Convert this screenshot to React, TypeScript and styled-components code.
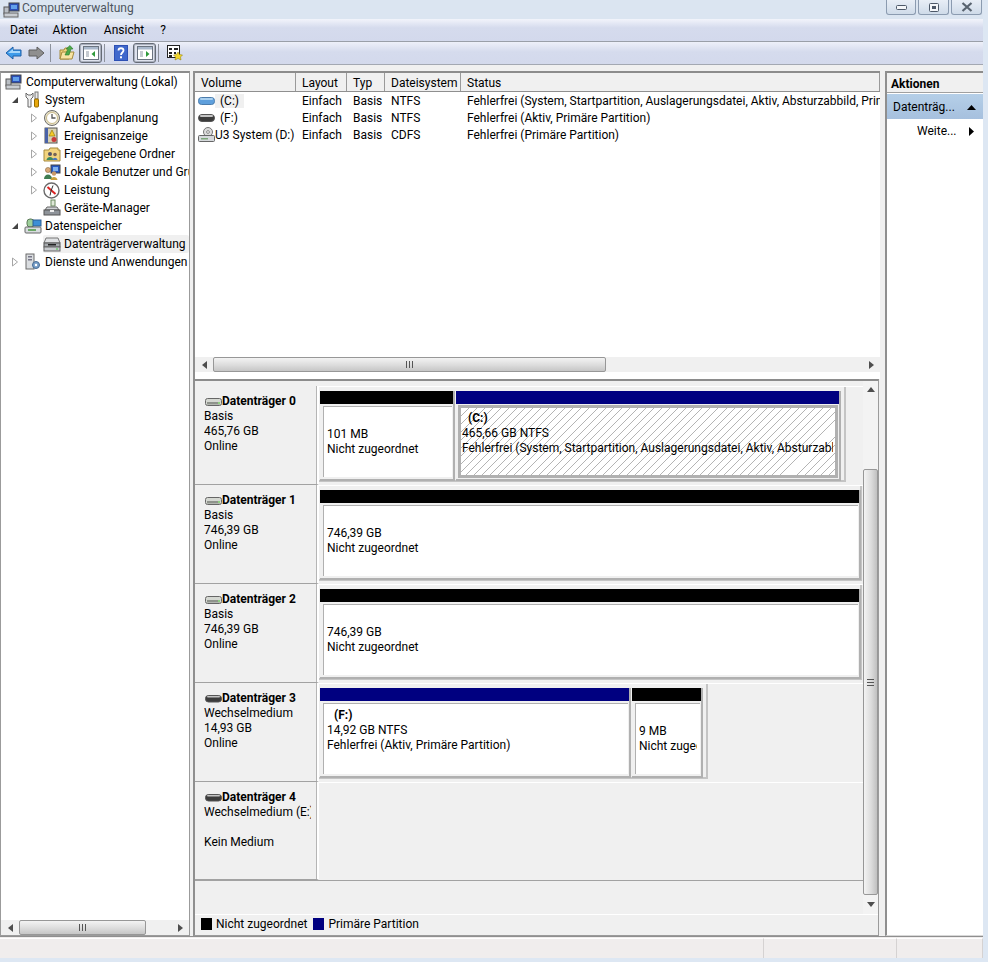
import React from 'react';
import styled, { createGlobalStyle } from 'styled-components';

const GlobalStyle = createGlobalStyle`
  html, body {
    margin: 0;
    padding: 0;
    background: #dde7f3;
  }
  body {
    font-family: Roboto, 'Noto Sans', sans-serif;
    font-size: 12px;
    color: #000;
    overflow: hidden;
  }
`;

/* ---------- icons ---------- */

const ComputerIcon = () => (
  <svg width="17" height="16" viewBox="0 0 17 16">
    <rect x="6" y="1" width="10" height="8" fill="#2b4fb8" stroke="#444" />
    <rect x="8" y="3" width="6" height="4" fill="#62a0ea" />
    <rect x="1" y="5" width="5" height="7" fill="#b9bec4" stroke="#555" />
    <rect x="1" y="11" width="14" height="4" fill="#c9cdd2" stroke="#666" />
  </svg>
);
const ToolsIcon = () => (
  <svg width="17" height="18" viewBox="0 0 17 18">
    <path d="M2 2 L2 6 L4 8 L4 16 L7 16 L7 8 L9 6 L9 2 L7 4 L4 4 Z" fill="#f2f2f2" stroke="#666" />
    <rect x="11" y="1" width="3" height="7" fill="#e8e8e8" stroke="#777" />
    <rect x="10.5" y="8" width="4" height="8" rx="1" fill="#e8a80c" stroke="#946b00" />
  </svg>
);
const ClockIcon = () => (
  <svg width="18" height="18" viewBox="0 0 18 18">
    <circle cx="9" cy="9" r="7.5" fill="#e8e2c8" stroke="#6d6d6d" />
    <circle cx="9" cy="9" r="5.5" fill="#fff" stroke="#c8b98a" />
    <path d="M9 5 V9 H12.5" fill="none" stroke="#555" strokeWidth="1.3" />
  </svg>
);
const EventIcon = () => (
  <svg width="17" height="18" viewBox="0 0 17 18">
    <rect x="2" y="1" width="12" height="15" fill="#d8d2b4" stroke="#555" />
    <rect x="2" y="1" width="3" height="15" fill="#4a63a8" />
    <path d="M9 3 L12 9 H6 Z" fill="#f5cc2a" stroke="#8a6c00" strokeWidth=".6" />
    <circle cx="11" cy="12.5" r="2.5" fill="#c83a3a" />
  </svg>
);
const SharedFolderIcon = () => (
  <svg width="18" height="17" viewBox="0 0 18 17">
    <path d="M1 4 H6 L7 2 H15 V4 H17 V15 H1 Z" fill="#f2d47e" stroke="#a58a3c" />
    <circle cx="7" cy="8" r="2" fill="#556" />
    <path d="M3.5 14 C4 10 10 10 10.5 14 Z" fill="#3c8a5e" />
    <circle cx="12" cy="8.5" r="1.8" fill="#765" />
    <path d="M9.5 14 C10 11 14 11 14.5 14 Z" fill="#4a76b8" />
  </svg>
);
const UsersIcon = () => (
  <svg width="18" height="17" viewBox="0 0 18 17">
    <rect x="8" y="1" width="9" height="8" fill="#2458c4" stroke="#444" />
    <rect x="10" y="3" width="5" height="4" fill="#7fb2ef" />
    <circle cx="5" cy="6" r="2.6" fill="#d8a878" stroke="#7a5a30" strokeWidth=".5" />
    <path d="M1 15 C1 9 9 9 9 15 Z" fill="#3f7d52" />
    <circle cx="11" cy="9.5" r="2.2" fill="#c89868" />
    <path d="M7.5 16 C8 12 14 12 14.5 16 Z" fill="#c8a03c" />
  </svg>
);
const PerformanceIcon = () => (
  <svg width="17" height="17" viewBox="0 0 17 17">
    <circle cx="8.5" cy="8.5" r="7.5" fill="#fff" stroke="#6a6a6a" strokeWidth="1.4" />
    <path d="M4.5 5 L12.5 12" stroke="#d22" strokeWidth="2" />
    <path d="M10 3.5 L8 9 L7 13.5" fill="none" stroke="#333" />
  </svg>
);
const DeviceIcon = () => (
  <svg width="18" height="18" viewBox="0 0 18 18">
    <rect x="8" y="1" width="4" height="6" fill="#dfe8d8" stroke="#6b8a5f" />
    <path d="M4 8 H14 L16 11 H2 Z" fill="#cfd2d5" stroke="#666" />
    <rect x="1" y="11" width="16" height="5" fill="#8f949a" stroke="#555" />
    <rect x="7" y="11" width="4" height="2" fill="#eee" />
  </svg>
);
const StorageIcon = () => (
  <svg width="18" height="18" viewBox="0 0 18 18">
    <rect x="3" y="2" width="7" height="8" rx="3" fill="#9dcf9a" stroke="#5c7a58" />
    <rect x="9" y="3" width="8" height="6" fill="#3d8fd6" stroke="#2c5f94" />
    <rect x="1" y="10" width="16" height="6" rx="1" fill="#d8dcdf" stroke="#666" />
    <rect x="4" y="12" width="8" height="2" fill="#6ca868" />
  </svg>
);
const DiskMgmtIcon = () => (
  <svg width="18" height="17" viewBox="0 0 18 17">
    <path d="M3 2 H15 L17 7 H1 Z" fill="#dfe1e3" stroke="#777" />
    <rect x="1" y="7" width="16" height="4" fill="#a6aaae" stroke="#555" />
    <rect x="1" y="11" width="16" height="4" fill="#c9ccd0" stroke="#666" />
    <rect x="5" y="8" width="8" height="1.5" fill="#222" />
    <rect x="13" y="12.5" width="2" height="1" fill="#4c4" />
  </svg>
);
const ServicesIcon = () => (
  <svg width="17" height="18" viewBox="0 0 17 18">
    <rect x="2" y="1" width="8" height="15" fill="#dadde0" stroke="#6a6a6a" />
    <rect x="4" y="3" width="4" height="1.5" fill="#778" />
    <rect x="4" y="6" width="4" height="1.5" fill="#778" />
    <circle cx="12" cy="12" r="3.5" fill="#7aa0c8" stroke="#456a94" />
    <circle cx="12" cy="12" r="1.2" fill="#fff" />
  </svg>
);

const BackIcon = () => (
  <svg width="17" height="14" viewBox="0 0 17 14">
    <path d="M1 7 L8 1 V4 H16 V10 H8 V13 Z" fill="#3d9bea" stroke="#1d5fa8" />
    <path d="M3 7 L8 3 V5 H15 V7 Z" fill="#a7d7fa" />
  </svg>
);
const ForwardIcon = () => (
  <svg width="17" height="14" viewBox="0 0 17 14">
    <path d="M16 7 L9 1 V4 H1 V10 H9 V13 Z" fill="#8f8f8f" stroke="#5f5f5f" />
  </svg>
);
const FolderUpIcon = () => (
  <svg width="16" height="16" viewBox="0 0 16 16">
    <path d="M1 5 H5 L6 3 H10 V14 H1 Z" fill="#f2d47e" stroke="#a58a3c" />
    <path d="M1 14 L3 7 H15 L13 14 Z" fill="#f8e4a4" stroke="#a58a3c" />
    <path d="M6 10 L9 4 L7 4 L11 0.5 L14 4 L12 4 L10 10 Z" fill="#4da94a" stroke="#2a7a2a" strokeWidth=".6" />
  </svg>
);
const PaneIcon = ({ arrow }: { arrow: 'left' | 'right' }) => (
  <svg width="16" height="14" viewBox="0 0 16 14">
    <rect x=".5" y=".5" width="15" height="13" fill="#fff" stroke="#6b7480" />
    <rect x="1" y="1" width="14" height="2.5" fill="#a9b8cc" />
    <path d="M3 6 H6 M3 8 H6 M3 10 H6" stroke="#8a94a0" />
    {arrow === 'left' ? (
      <path d="M12 5 L8.5 8 L12 11 Z" fill="#2f9a3a" />
    ) : (
      <path d="M9 5 L12.5 8 L9 11 Z" fill="#2f9a3a" />
    )}
  </svg>
);
const HelpIcon = () => (
  <svg width="14" height="16" viewBox="0 0 14 16">
    <rect width="14" height="16" fill="#2d50b4" />
    <rect x="1" y="1" width="12" height="14" fill="#3f68cc" />
    <path d="M4.5 5.5 C4.5 2.5 9.5 2.5 9.5 5.5 C9.5 7.5 7 7.5 7 10" fill="none" stroke="#fff" strokeWidth="1.8" />
    <rect x="6" y="11.3" width="2" height="2" fill="#fff" />
  </svg>
);
const PropertiesIcon = () => (
  <svg width="16" height="16" viewBox="0 0 16 16">
    <rect x=".5" y=".5" width="12" height="12" fill="#fff" stroke="#222" />
    <path d="M2 3 H5 V5 H2 Z M7 3 H11 V5 H7 Z M2 7 H5 V9 H2 Z M7 7 H9 V9 H7 Z M2 10 H5 V12 H2 Z" fill="#222" />
    <path d="M11 7 L12.5 9.5 L15.5 10 L13.5 12 L14 15 L11 13.5 L8 15 L8.5 12 L6.5 10 L9.5 9.5 Z" fill="#f2d52a" stroke="#8a7a00" strokeWidth=".5" />
  </svg>
);

const VolumeIcon = ({ kind }: { kind: 'blue' | 'dark' | 'light' }) => {
  if (kind === 'blue')
    return (
      <svg width="17" height="10" viewBox="0 0 17 10">
        <rect x=".5" y="1.5" width="16" height="7" rx="3" fill="#5e9fdc" stroke="#4b7bab" />
        <rect x="2" y="2" width="13" height="2" rx="1" fill="#a9d0f0" />
      </svg>
    );
  if (kind === 'dark')
    return (
      <svg width="17" height="10" viewBox="0 0 17 10">
        <rect x=".5" y="1.5" width="16" height="7" rx="3.5" fill="#3c3c3c" stroke="#555" />
        <rect x="2" y="2" width="13" height="2" rx="1" fill="#c4c4c4" />
      </svg>
    );
  return (
    <svg width="17" height="16" viewBox="0 0 17 16">
      <circle cx="10" cy="5" r="4.5" fill="#dcdcdc" stroke="#777" />
      <circle cx="10" cy="5" r="1.4" fill="#fff" stroke="#888" />
      <rect x=".5" y="8.5" width="16" height="6" rx="1" fill="#d6d9dc" stroke="#666" />
      <rect x="3" y="11" width="7" height="1.5" fill="#7da67a" />
    </svg>
  );
};

const DiskIcon = ({ dark }: { dark?: boolean }) =>
  dark ? (
    <svg width="17" height="8" viewBox="0 0 17 8">
      <rect x=".5" y=".5" width="16" height="6.5" rx="3" fill="#3c3c3c" stroke="#555" />
      <rect x="2" y="1" width="13" height="1.6" rx=".8" fill="#c4c4c4" />
    </svg>
  ) : (
    <svg width="17" height="8" viewBox="0 0 17 8">
      <rect x=".5" y=".5" width="16" height="7" rx="2" fill="#d5d8d2" stroke="#666" />
      <rect x="2" y="4" width="13" height="2.5" fill="#8f938c" />
      <rect x="13" y="4" width="2" height="2" fill="#8fd080" />
    </svg>
  );

/* ---------- window frame ---------- */

const Page = styled.div`
  width: 988px;
  height: 962px;
  overflow: hidden;
  display: flex;
  flex-direction: column;
`;

const Frame = styled.div`
  width: 983px;
  height: 958px;
  display: flex;
  flex-direction: column;
`;

const TitleBar = styled.div`
  height: 19px;
  display: flex;
  align-items: center;
  padding-left: 3px;
  background: #dbe5f1;
`;

const TitleText = styled.span`
  margin-left: 2px;
  color: #4d5660;
  margin-top: -3px;
`;

const WindowButtons = styled.div`
  margin-left: auto;
  margin-right: 1px;
  display: flex;
  gap: 2px;
  align-self: flex-start;
`;

const WindowButton = styled.div<{ $width: number }>`
  width: ${(p) => p.$width}px;
  height: 15px;
  box-sizing: border-box;
  border: 1px solid #8b9bb0;
  border-top: 0;
  border-radius: 0 0 3px 3px;
  background: linear-gradient(#e8eef6, #cfdbe9);
  display: flex;
  align-items: center;
  justify-content: center;
`;

const MenuBar = styled.div`
  height: 22px;
  box-sizing: content-box;
  border-bottom: 1px solid #9a9fa8;
  background: linear-gradient(#f2f4fb 0, #d5dbed 40%, #d3d9ec 100%);
  display: flex;
  align-items: center;
  padding-top: 0;
`;

const MenuItem = styled.span<{ $left: number }>`
  margin-left: ${(p) => p.$left}px;
`;

const ToolBar = styled.div`
  height: 22px;
  border-bottom: 1px solid #a3a8b2;
  background: linear-gradient(#eef0f9 0, #d5dbed 45%, #d3d9ec 100%);
  display: flex;
  align-items: center;
`;

const ToolButton = styled.div<{ $width: number; $left: number; $active?: boolean }>`
  width: ${(p) => p.$width}px;
  margin-left: ${(p) => p.$left}px;
  height: ${(p) => (p.$active ? '20px' : 'auto')};
  box-sizing: border-box;
  display: flex;
  align-items: center;
  justify-content: center;
  border: ${(p) => (p.$active ? '1px solid #656b76' : '0')};
  box-shadow: ${(p) => (p.$active ? 'inset 0 0 0 1px #aab0bd' : 'none')};
  border-radius: 3px;
  background: ${(p) => (p.$active ? '#dfe3ee' : 'transparent')};
`;

const ToolSeparator = styled.div<{ $left: number }>`
  width: 1px;
  height: 18px;
  margin-left: ${(p) => p.$left}px;
  background: #8d929c;
`;

const Main = styled.div`
  flex: 1;
  min-height: 0;
  display: flex;
  padding-top: 6px;
  background: #f0f0f0;
`;

const StatusBar = styled.div`
  height: 21px;
  border-top: 1px solid #8f8f8f;
  background: #f0eded;
  display: flex;
`;

const StatusCell = styled.div<{ $width?: number }>`
  box-sizing: border-box;
  flex: ${(p) => (p.$width ? `0 0 ${p.$width}px` : '1')};
  border-right: 1px solid #d5d2d2;
  margin-top: 1px;
  border-top: 1px solid #fff;
`;

/* ---------- tree ---------- */

const TreePanel = styled.div`
  width: 190px;
  box-sizing: border-box;
  border: 1px solid #9b9b9b;
  border-top: 2px solid #8c8c8c;
  background: #fff;
  display: flex;
  flex-direction: column;
  margin-right: 3px;
`;

const TreeBody = styled.div`
  flex: 1;
  overflow: hidden;
`;

const TreeRow = styled.div<{ $indent: number }>`
  height: 18px;
  display: flex;
  align-items: center;
  padding-left: ${(p) => p.$indent}px;
  white-space: nowrap;
`;

const Twisty = styled.div`
  width: 18px;
  flex: none;
  display: flex;
  justify-content: center;
`;

const IconSlot = styled.div`
  width: 21px;
  height: 18px;
  flex: none;
  display: flex;
  align-items: center;
`;

const TreeEntry = styled.div<{ $selected?: boolean }>`
  flex: 1;
  min-width: 0;
  height: 18px;
  display: flex;
  align-items: center;
  overflow: hidden;
  box-sizing: border-box;
  background: ${(p) => (p.$selected ? '#f0f0f0' : 'transparent')};
  border-radius: 2px;
`;

const TreeLabel = styled.span`
  white-space: nowrap;
`;

const Collapsed = () => (
  <svg width="8" height="10" viewBox="0 0 8 10">
    <path d="M1.5 1 L6.5 5 L1.5 9 Z" fill="#fff" stroke="#a6a6a6" />
  </svg>
);
const Expanded = () => (
  <svg width="8" height="8" viewBox="0 0 8 8">
    <path d="M7 1 V7 H1 Z" fill="#444" />
  </svg>
);

/* ---------- scrollbars ---------- */

const HScrollBar = styled.div`
  height: 15px;
  display: flex;
  align-items: stretch;
  background: #f0f0f0;
`;

const ScrollArrow = styled.div<{ $size: number }>`
  flex: 0 0 ${(p) => p.$size}px;
  display: flex;
  align-items: center;
  justify-content: center;
`;

const HTrack = styled.div`
  flex: 1;
  min-width: 0;
  display: flex;
`;

const HThumb = styled.div<{ $width: number }>`
  width: ${(p) => p.$width}px;
  box-sizing: border-box;
  border: 1px solid #979797;
  border-radius: 2px;
  background: linear-gradient(#f3f3f3, #dcdcdc 55%, #c6c6c6);
  display: flex;
  align-items: center;
  justify-content: center;
`;

const VScrollBar = styled.div`
  width: 15px;
  flex: none;
  display: flex;
  flex-direction: column;
  background: #f3f3f3;
`;

const VThumb = styled.div`
  margin-top: 72px;
  height: 426px;
  box-sizing: border-box;
  border: 1px solid #979797;
  border-radius: 2px;
  background: linear-gradient(90deg, #f3f3f3, #dcdcdc 55%, #c0c0c0);
  display: flex;
  align-items: center;
  justify-content: center;
`;

const GripH = () => (
  <svg width="7" height="7" viewBox="0 0 7 7">
    <path d="M.5 0 V7 M3.5 0 V7 M6.5 0 V7" stroke="#555" />
  </svg>
);
const GripV = () => (
  <svg width="7" height="7" viewBox="0 0 7 7">
    <path d="M0 .5 H7 M0 3.5 H7 M0 6.5 H7" stroke="#555" />
  </svg>
);
const ArrowGlyph = ({ dir }: { dir: 'left' | 'right' | 'up' | 'down' }) => {
  const shape = {
    left: 'M5 0 L0 4 L5 8 Z',
    right: 'M0 0 L5 4 L0 8 Z',
    up: 'M4 0 L8 5 L0 5 Z',
    down: 'M0 0 L8 0 L4 5 Z',
  }[dir];
  const horizontal = dir === 'left' || dir === 'right';
  return (
    <svg width={horizontal ? 5 : 8} height={horizontal ? 8 : 5} viewBox={horizontal ? '0 0 5 8' : '0 0 8 5'}>
      <path d={shape} fill="#4e4e4e" />
    </svg>
  );
};

/* ---------- centre ---------- */

const CenterPanel = styled.div`
  width: 687px;
  flex: none;
  display: flex;
  flex-direction: column;
  margin-right: 5px;
`;

const VolumePane = styled.div`
  height: 308px;
  box-sizing: border-box;
  border-left: 2px solid #8f8f8f;
  border-top: 2px solid #8c8c8c;
  background: #fff;
  display: flex;
  flex-direction: column;
`;

const HeaderRow = styled.div`
  height: 18px;
  display: flex;
  background: #f0f0f0;
  border-bottom: 1px solid #8f8f8f;
`;

const HeaderCell = styled.div<{ $width: number; $flex?: boolean }>`
  flex: ${(p) => (p.$flex ? '1' : `0 0 ${p.$width}px`)};
  box-sizing: border-box;
  padding-left: 6px;
  border-right: 1px solid #9a9a9a;
  line-height: 20px;
  white-space: nowrap;
  overflow: hidden;
`;

const VolumeRows = styled.div`
  flex: 1;
  overflow: hidden;
`;

const VolumeRow = styled.div`
  height: 17px;
  display: flex;
  align-items: center;
`;

const VolumeCell = styled.div<{ $width: number; $flex?: boolean }>`
  flex: ${(p) => (p.$flex ? '1' : `0 0 ${p.$width}px`)};
  min-width: 0;
  padding-left: 6px;
  box-sizing: border-box;
  white-space: nowrap;
  overflow: hidden;
`;

const VolumeNameCell = styled.div`
  flex: 0 0 101px;
  display: flex;
  align-items: center;
  padding-left: 3px;
  box-sizing: border-box;
  white-space: nowrap;
  overflow: hidden;
`;

const VolumeIconSlot = styled.div`
  width: 17px;
  flex: none;
  display: flex;
  align-items: center;
`;

const VolumeName = styled.span<{ $indent?: boolean; $selected?: boolean }>`
  padding: 0 ${(p) => (p.$indent ? '5px' : '0')};
  background: ${(p) => (p.$selected ? '#f0f0f0' : 'transparent')};
`;

const PaneGap = styled.div`
  height: 7px;
  background: #fff;
`;

const DiskPane = styled.div`
  flex: 1;
  min-height: 0;
  display: flex;
  flex-direction: column;
  margin-right: 1px;
  border-top: 2px solid #8c8c8c;
  border-left: 2px solid #8f8f8f;
  border-bottom: 1px solid #9b9b9b;
  border-right: 1px solid #9b9b9b;
`;

const DiskScroller = styled.div`
  flex: 1;
  min-height: 0;
  display: flex;
`;

const DiskList = styled.div`
  flex: 1;
  min-width: 0;
  padding-top: 5px;
`;

const DiskRow = styled.div<{ $last?: boolean }>`
  height: 99px;
  display: flex;
  border-bottom: ${(p) => (p.$last ? '1px solid #a2a2a2' : '0')};
  box-sizing: border-box;
`;

const DiskLabel = styled.div`
  flex: 0 0 124px;
  box-sizing: border-box;
  padding: 8px 0 0 9px;
  border-right: 2px solid #fff;
  border-bottom: 1px solid #a2a2a2;
  box-shadow: inset -1px 0 0 #b5b5b5;
  line-height: 15px;
  overflow: hidden;
`;

const DiskTitle = styled.div`
  display: flex;
  align-items: center;
  margin-left: 1px;
  font-weight: 700;
  white-space: nowrap;
`;

const DiskLine = styled.div`
  white-space: nowrap;
  overflow: hidden;
  margin-right: 6px;
  min-height: 15px;
`;

const DiskContent = styled.div`
  flex: 1;
  min-width: 0;
  border-top: 1px solid #fff;
`;

const PartitionGroup = styled.div<{ $padRight: number }>`
  display: inline-flex;
  gap: 3px;
  height: 95px;
  box-sizing: border-box;
  padding: 4px ${(p) => p.$padRight}px 0 1px;
  border-right: 2px solid #c4c4c4;
  border-bottom: 2px solid #c4c4c4;
  vertical-align: top;
`;

const Partition = styled.div<{ $width: number }>`
  width: ${(p) => p.$width}px;
  height: 88px;
  display: flex;
  flex-direction: column;
  border-bottom: 2px solid #b0b0b0;
  box-shadow: 2px 0 0 #b0b0b0;
`;

const PartitionBar = styled.div<{ $color: string }>`
  height: 13px;
  flex: none;
  background: ${(p) => p.$color};
`;

const PartitionBody = styled.div<{ $selected?: boolean }>`
  flex: 1;
  min-height: 0;
  margin: ${(p) => (p.$selected ? '1px 1px 1px 2px' : '2px 1px 2px 3px')};
  box-sizing: border-box;
  padding: ${(p) => (p.$selected ? '3px 0 0 0' : '4px 0 0 3px')};
  border-style: solid;
  border-color: #b0b0b0;
  border-width: ${(p) => (p.$selected ? '3px' : '1px 0 0 1px')};
  background: ${(p) =>
    p.$selected ? 'repeating-linear-gradient(135deg, #fff 0 5px, #b4b4b4 5px 5.7px)' : '#fff'};
  overflow: hidden;
  line-height: 15px;
`;

const PartitionLine = styled.div<{ $title?: boolean; $selected?: boolean }>`
  height: 15px;
  white-space: nowrap;
  font-weight: ${(p) => (p.$title ? 700 : 400)};
  padding-left: ${(p) => (p.$title ? '7px' : p.$selected ? '1px' : '0')};
`;

const PartitionSpacer = styled.div`
  height: 16px;
`;

const PartitionClip = styled.div<{ $rightPad: number }>`
  overflow: hidden;
  margin-right: ${(p) => p.$rightPad}px;
`;

const Legend = styled.div`
  height: 21px;
  box-sizing: border-box;
  border-top: 1px solid #fff;
  padding: 0 0 2px 6px;
  display: flex;
  align-items: center;
`;

const LegendSwatch = styled.div<{ $color: string }>`
  width: 11px;
  height: 12px;
  background: ${(p) => p.$color};
  margin-right: 4px;
`;

const LegendText = styled.span`
  margin-right: 6px;
`;

/* ---------- actions ---------- */

const ActionsPanel = styled.div`
  flex: 1;
  min-width: 0;
  box-sizing: border-box;
  border-top: 2px solid #8c8c8c;
  border-left: 2px solid #8f8f8f;
  border-bottom: 1px solid #d8d8d8;
  background: #fff;
  display: flex;
  flex-direction: column;
`;

const ActionsHeader = styled.div`
  height: 19px;
  padding-left: 4px;
  background: #f0f0f0;
  border-bottom: 1px solid #a0a0a0;
  font-weight: 700;
  line-height: 23px;
`;

const ActionGroup = styled.div`
  height: 25px;
  margin-top: 1px;
  box-sizing: border-box;
  padding: 1px 0 0 6px;
  display: flex;
  align-items: center;
  background: linear-gradient(#b5cfe8, #a6c0de);
`;

const ActionItem = styled.div`
  height: 24px;
  display: flex;
  align-items: center;
  padding-left: 30px;
`;

const ActionCaret = styled.div<{ $left: number }>`
  position: absolute;
  left: ${(p) => p.$left}px;
  display: flex;
`;

const ActionAnchor = styled.div`
  position: relative;
  display: flex;
  align-items: center;
  flex: 1;
`;

/* ---------- data ---------- */

type TreeItem = {
  label: string;
  indent: number;
  state?: 'open' | 'closed';
  root?: boolean;
  icon: React.ReactNode;
  selected?: boolean;
};

const treeItems: TreeItem[] = [
  { label: 'Computerverwaltung (Lokal)', indent: 4, root: true, icon: <ComputerIcon /> },
  { label: 'System', indent: 5, state: 'open', icon: <ToolsIcon /> },
  { label: 'Aufgabenplanung', indent: 24, state: 'closed', icon: <ClockIcon /> },
  { label: 'Ereignisanzeige', indent: 24, state: 'closed', icon: <EventIcon /> },
  { label: 'Freigegebene Ordner', indent: 24, state: 'closed', icon: <SharedFolderIcon /> },
  { label: 'Lokale Benutzer und Gruppen', indent: 24, state: 'closed', icon: <UsersIcon /> },
  { label: 'Leistung', indent: 24, state: 'closed', icon: <PerformanceIcon /> },
  { label: 'Geräte-Manager', indent: 24, icon: <DeviceIcon /> },
  { label: 'Datenspeicher', indent: 5, state: 'open', icon: <StorageIcon /> },
  { label: 'Datenträgerverwaltung', indent: 24, icon: <DiskMgmtIcon />, selected: true },
  { label: 'Dienste und Anwendungen', indent: 5, state: 'closed', icon: <ServicesIcon /> },
];

const columns = [
  { label: 'Volume', width: 101 },
  { label: 'Layout', width: 51 },
  { label: 'Typ', width: 38 },
  { label: 'Dateisystem', width: 76 },
];

const volumes = [
  {
    name: '(C:)',
    icon: 'blue' as const,
    fs: 'NTFS',
    status: 'Fehlerfrei (System, Startpartition, Auslagerungsdatei, Aktiv, Absturzabbild, Primäre Partition)',
  },
  { name: '(F:)', icon: 'dark' as const, fs: 'NTFS', status: 'Fehlerfrei (Aktiv, Primäre Partition)' },
  { name: 'U3 System (D:)', icon: 'light' as const, fs: 'CDFS', status: 'Fehlerfrei (Primäre Partition)' },
];

type PartitionData = {
  width: number;
  color: string;
  title?: string;
  lines: string[];
  selected?: boolean;
  clip?: number;
};

type DiskData = {
  title: string;
  dark?: boolean;
  lines: string[];
  padRight: number;
  partitions: PartitionData[];
};

const BLACK = '#000';
const NAVY = '#000080';

const disks: DiskData[] = [
  {
    title: 'Datenträger 0',
    lines: ['Basis', '465,76 GB', 'Online'],
    padRight: 5,
    partitions: [
      { width: 133, color: BLACK, lines: ['101 MB', 'Nicht zugeordnet'] },
      {
        width: 383,
        color: NAVY,
        title: '(C:)',
        selected: true,
        clip: 2,
        lines: ['465,66 GB NTFS', 'Fehlerfrei (System, Startpartition, Auslagerungsdatei, Aktiv, Absturzabbild, Primäre Partition)'],
      },
    ],
  },
  {
    title: 'Datenträger 1',
    lines: ['Basis', '746,39 GB', 'Online'],
    padRight: 1,
    partitions: [{ width: 539, color: BLACK, lines: ['746,39 GB', 'Nicht zugeordnet'] }],
  },
  {
    title: 'Datenträger 2',
    lines: ['Basis', '746,39 GB', 'Online'],
    padRight: 1,
    partitions: [{ width: 539, color: BLACK, lines: ['746,39 GB', 'Nicht zugeordnet'] }],
  },
  {
    title: 'Datenträger 3',
    dark: true,
    lines: ['Wechselmedium', '14,93 GB', 'Online'],
    padRight: 5,
    partitions: [
      { width: 309, color: NAVY, title: '(F:)', lines: ['14,92 GB NTFS', 'Fehlerfrei (Aktiv, Primäre Partition)'] },
      { width: 69, color: BLACK, clip: 3, lines: ['9 MB', 'Nicht zugeordnet'] },
    ],
  },
];

const App = () => {
  return (
    <Page>
      <GlobalStyle />
      <Frame>
        <TitleBar>
          <ComputerIcon />
          <TitleText>Computerverwaltung</TitleText>
          <WindowButtons>
            <WindowButton $width={30}>
              <svg width="11" height="5" viewBox="0 0 11 5">
                <rect x=".5" y=".5" width="10" height="4" rx="1" fill="#f4f6f9" stroke="#4d5868" />
              </svg>
            </WindowButton>
            <WindowButton $width={31}>
              <svg width="10" height="9" viewBox="0 0 10 9">
                <rect x=".5" y=".5" width="9" height="8" rx="1" fill="#f4f6f9" stroke="#4d5868" />
                <rect x="3" y="3" width="4" height="3" fill="#4d5868" />
              </svg>
            </WindowButton>
            <WindowButton $width={31}>
              <svg width="12" height="10" viewBox="0 0 12 10">
                <path d="M1.5 1 L10.5 9 M10.5 1 L1.5 9" stroke="#58636f" strokeWidth="2.2" />
              </svg>
            </WindowButton>
          </WindowButtons>
        </TitleBar>

        <MenuBar>
          <MenuItem $left={10}>Datei</MenuItem>
          <MenuItem $left={15}>Aktion</MenuItem>
          <MenuItem $left={17}>Ansicht</MenuItem>
          <MenuItem $left={16}>?</MenuItem>
        </MenuBar>

        <ToolBar>
          <ToolButton $width={18} $left={4}>
            <BackIcon />
          </ToolButton>
          <ToolButton $width={18} $left={5}>
            <ForwardIcon />
          </ToolButton>
          <ToolSeparator $left={5} />
          <ToolButton $width={16} $left={8}>
            <FolderUpIcon />
          </ToolButton>
          <ToolButton $width={23} $left={4} $active>
            <PaneIcon arrow="left" />
          </ToolButton>
          <ToolSeparator $left={2} />
          <ToolButton $width={14} $left={9}>
            <HelpIcon />
          </ToolButton>
          <ToolButton $width={23} $left={5} $active>
            <PaneIcon arrow="right" />
          </ToolButton>
          <ToolSeparator $left={2} />
          <ToolButton $width={16} $left={8}>
            <PropertiesIcon />
          </ToolButton>
        </ToolBar>

        <Main>
          <TreePanel>
            <TreeBody>
              {treeItems.map((item) => (
                <TreeRow key={item.label} $indent={item.indent}>
                  {!item.root && (
                    <Twisty>
                      {item.state === 'open' && <Expanded />}
                      {item.state === 'closed' && <Collapsed />}
                    </Twisty>
                  )}
                  <TreeEntry $selected={item.selected}>
                    <IconSlot>{item.icon}</IconSlot>
                    <TreeLabel>{item.label}</TreeLabel>
                  </TreeEntry>
                </TreeRow>
              ))}
            </TreeBody>
            <HScrollBar>
              <ScrollArrow $size={18}>
                <ArrowGlyph dir="left" />
              </ScrollArrow>
              <HTrack>
                <HThumb $width={127}>
                  <GripH />
                </HThumb>
              </HTrack>
              <ScrollArrow $size={18}>
                <ArrowGlyph dir="right" />
              </ScrollArrow>
            </HScrollBar>
          </TreePanel>

          <CenterPanel>
            <VolumePane>
              <HeaderRow>
                {columns.map((col) => (
                  <HeaderCell key={col.label} $width={col.width}>
                    {col.label}
                  </HeaderCell>
                ))}
                <HeaderCell $width={0} $flex>
                  Status
                </HeaderCell>
              </HeaderRow>
              <VolumeRows>
                {volumes.map((vol, i) => (
                  <VolumeRow key={vol.name}>
                    <VolumeNameCell>
                      <VolumeIconSlot>
                        <VolumeIcon kind={vol.icon} />
                      </VolumeIconSlot>
                      <VolumeName $indent={vol.icon !== 'light'} $selected={i === 0}>
                        {vol.name}
                      </VolumeName>
                    </VolumeNameCell>
                    <VolumeCell $width={51}>Einfach</VolumeCell>
                    <VolumeCell $width={38}>Basis</VolumeCell>
                    <VolumeCell $width={76}>{vol.fs}</VolumeCell>
                    <VolumeCell $width={0} $flex>
                      {vol.status}
                    </VolumeCell>
                  </VolumeRow>
                ))}
              </VolumeRows>
              <HScrollBar>
                <ScrollArrow $size={18}>
                  <ArrowGlyph dir="left" />
                </ScrollArrow>
                <HTrack>
                  <HThumb $width={393}>
                    <GripH />
                  </HThumb>
                </HTrack>
                <ScrollArrow $size={18}>
                  <ArrowGlyph dir="right" />
                </ScrollArrow>
              </HScrollBar>
              <PaneGap />
            </VolumePane>

            <DiskPane>
              <DiskScroller>
                <DiskList>
                  {disks.map((disk) => (
                    <DiskRow key={disk.title}>
                      <DiskLabel>
                        <DiskTitle>
                          <DiskIcon dark={disk.dark} />
                          {disk.title}
                        </DiskTitle>
                        {disk.lines.map((line) => (
                          <DiskLine key={line}>{line}</DiskLine>
                        ))}
                      </DiskLabel>
                      <DiskContent>
                        <PartitionGroup $padRight={disk.padRight}>
                          {disk.partitions.map((part) => (
                            <Partition key={part.width + part.color} $width={part.width}>
                              <PartitionBar $color={part.color} />
                              <PartitionBody $selected={part.selected}>
                                <PartitionClip $rightPad={part.clip ?? 0}>
                                  {part.title ? (
                                    <PartitionLine $title>{part.title}</PartitionLine>
                                  ) : (
                                    <PartitionSpacer />
                                  )}
                                  {part.lines.map((line) => (
                                    <PartitionLine key={line} $selected={part.selected}>
                                      {line}
                                    </PartitionLine>
                                  ))}
                                </PartitionClip>
                              </PartitionBody>
                            </Partition>
                          ))}
                        </PartitionGroup>
                      </DiskContent>
                    </DiskRow>
                  ))}
                  <DiskRow $last>
                    <DiskLabel>
                      <DiskTitle>
                        <DiskIcon dark />
                        Datenträger 4
                      </DiskTitle>
                      <DiskLine>Wechselmedium (E:)</DiskLine>
                      <DiskLine />
                      <DiskLine>Kein Medium</DiskLine>
                    </DiskLabel>
                    <DiskContent />
                  </DiskRow>
                </DiskList>
                <VScrollBar>
                  <ScrollArrow $size={16}>
                    <ArrowGlyph dir="up" />
                  </ScrollArrow>
                  <VThumb>
                    <GripV />
                  </VThumb>
                  <ScrollArrow $size={18}>
                    <ArrowGlyph dir="down" />
                  </ScrollArrow>
                </VScrollBar>
              </DiskScroller>
              <Legend>
                <LegendSwatch $color={BLACK} />
                <LegendText>Nicht zugeordnet</LegendText>
                <LegendSwatch $color={NAVY} />
                <LegendText>Primäre Partition</LegendText>
              </Legend>
            </DiskPane>
          </CenterPanel>

          <ActionsPanel>
            <ActionsHeader>Aktionen</ActionsHeader>
            <ActionGroup>
              <ActionAnchor>
                Datenträg...
                <ActionCaret $left={74}>
                  <svg width="9" height="5" viewBox="0 0 9 5">
                    <path d="M4.5 0 L9 5 H0 Z" fill="#000" />
                  </svg>
                </ActionCaret>
              </ActionAnchor>
            </ActionGroup>
            <ActionItem>
              <ActionAnchor>
                Weite...
                <ActionCaret $left={52}>
                  <svg width="5" height="9" viewBox="0 0 5 9">
                    <path d="M0 0 L5 4.5 L0 9 Z" fill="#000" />
                  </svg>
                </ActionCaret>
              </ActionAnchor>
            </ActionItem>
          </ActionsPanel>
        </Main>

        <StatusBar>
          <StatusCell $width={764} />
          <StatusCell $width={133} />
          <StatusCell />
        </StatusBar>
      </Frame>
    </Page>
  );
};

export default App;
